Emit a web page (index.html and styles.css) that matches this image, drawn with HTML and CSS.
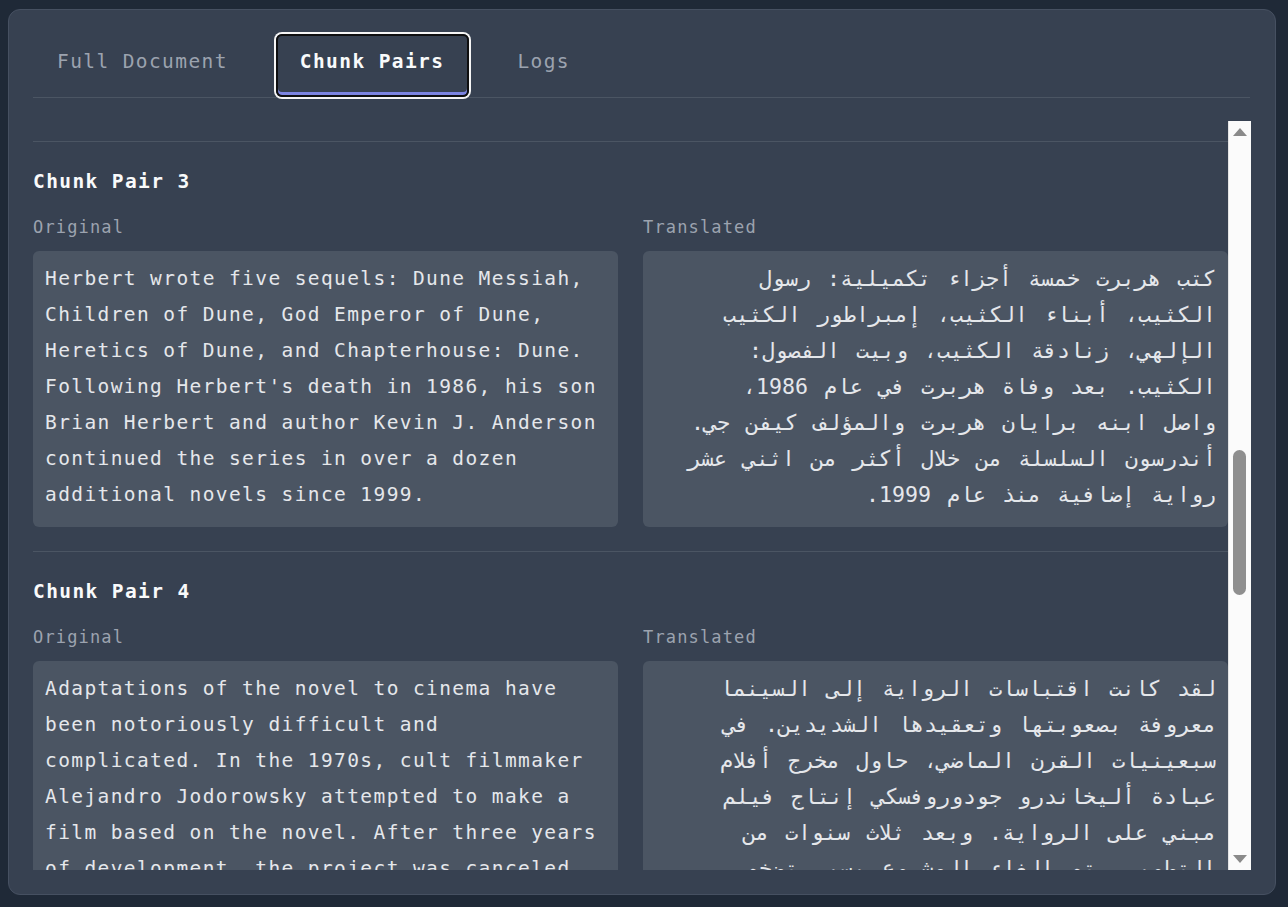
FILE: index.html
```html
<!DOCTYPE html>
<html lang="en">
<head>
<meta charset="utf-8">
<title>Chunk Pairs</title>
<link rel="stylesheet" href="styles.css">
</head>
<body>
<main class="card">
  <nav class="tabs">
    <button class="tab">Full Document</button>
    <button class="tab tab-active">Chunk Pairs</button>
    <button class="tab">Logs</button>
  </nav>
  <div class="scroll-wrap">
  <section class="scroll" id="scroll">
    <article class="chunk">
      <h3 class="chunk-title">Chunk Pair 1</h3>
      <div class="pair">
        <div class="col">
          <div class="label">Original</div>
          <div class="text">Dune is a 1965 epic science fiction novel by American author Frank Herbert, originally published as two separate serials in Analog magazine. It tied with Roger Zelazny's This Immortal for the Hugo Award in 1966, and it won the inaugural Nebula Award for Best Novel. It is the first installment of the Dune Chronicles. It is one of the world's best-selling science fiction novels. Set in the distant future in a feudal interstellar society in which various noble houses control planetary fiefs, Dune tells the story of young Paul Atreides, whose family accepts the stewardship of the planet Arrakis.</div>
        </div>
        <div class="col">
          <div class="label">Translated</div>
          <div class="text text-rtl" dir="rtl" lang="ar">الكثيب هي رواية خيال علمي ملحمية صدرت عام 1965 للمؤلف الأمريكي فرانك هربرت، ونُشرت في الأصل على شكل سلسلتين منفصلتين في مجلة أنالوج. تعادلت مع رواية هذا الخالد لروجر زيلازني في جائزة هوغو عام 1966، وفازت بأول جائزة نيبولا لأفضل رواية. وهي الجزء الأول من سجلات الكثيب، وواحدة من أكثر روايات الخيال العلمي مبيعًا في العالم. تدور أحداثها في المستقبل البعيد في مجتمع إقطاعي بين النجوم تسيطر فيه بيوت نبيلة مختلفة على إقطاعيات كوكبية، وتروي قصة الشاب بول أتريديس الذي تقبل عائلته الوصاية على كوكب أراكيس.</div>
        </div>
      </div>
    </article>
    <article class="chunk">
      <h3 class="chunk-title">Chunk Pair 2</h3>
      <div class="pair">
        <div class="col">
          <div class="label">Original</div>
          <div class="text">While the planet is an inhospitable and sparsely populated desert wasteland, it is the only source of melange, or spice, a drug that extends life and enhances mental abilities. Melange is also necessary for space navigation, which requires a kind of multidimensional awareness and foresight that only the drug provides. As melange can only be produced on Arrakis, control of the planet is a coveted and dangerous undertaking. The story explores the multilayered interactions of politics, religion, ecology, technology, and human emotion, as the factions of the empire confront each other in a struggle for the control of Arrakis and its spice. Herbert began researching the novel in 1959 after visiting the Oregon Dunes near Florence, where the United States Department of Agriculture was using poverty grasses to stabilize the shifting sand.</div>
        </div>
        <div class="col">
          <div class="label">Translated</div>
          <div class="text text-rtl" dir="rtl" lang="ar">على الرغم من أن الكوكب صحراء قاحلة غير مضيافة وقليلة السكان، إلا أنه المصدر الوحيد للميلانج، أو التوابل، وهو عقار يطيل العمر ويعزز القدرات العقلية. والميلانج ضروري أيضًا للملاحة الفضائية، التي تتطلب نوعًا من الوعي متعدد الأبعاد والبصيرة لا يوفره سوى هذا العقار. ولأن الميلانج لا يمكن إنتاجه إلا على أراكيس، فإن السيطرة على الكوكب مهمة مرغوبة وخطيرة. تستكشف القصة التفاعلات متعددة الطبقات بين السياسة والدين والبيئة والتكنولوجيا والعاطفة الإنسانية، بينما تتواجه فصائل الإمبراطورية في صراع للسيطرة على أراكيس وتوابلها. بدأ هربرت البحث لكتابة الرواية عام 1959 بعد زيارته لكثبان أوريغون قرب مدينة فلورنس، حيث كانت وزارة الزراعة الأمريكية تستخدم أعشاب الفقر لتثبيت الرمال المتحركة.</div>
        </div>
      </div>
    </article>
    <article class="chunk" id="c3">
      <h3 class="chunk-title">Chunk Pair 3</h3>
      <div class="pair">
        <div class="col">
          <div class="label">Original</div>
          <div class="text">Herbert wrote five sequels: Dune Messiah, Children of Dune, God Emperor of Dune, Heretics of Dune, and Chapterhouse: Dune. Following Herbert's death in 1986, his son Brian Herbert and author Kevin J. Anderson continued the series in over a dozen additional novels since 1999.</div>
        </div>
        <div class="col">
          <div class="label">Translated</div>
          <div class="text text-rtl" dir="rtl" lang="ar">كتب هربرت خمسة أجزاء تكميلية: رسول الكثيب، أبناء الكثيب، إمبراطور الكثيب الإلهي، زنادقة الكثيب، وبيت الفصول: الكثيب. بعد وفاة هربرت في عام 1986، واصل&nbsp;ابنه برايان هربرت والمؤلف كيفن جي. أندرسون السلسلة من خلال أكثر من اثني عشر رواية إضافية منذ عام 1999.</div>
        </div>
      </div>
    </article>
    <article class="chunk">
      <h3 class="chunk-title">Chunk Pair 4</h3>
      <div class="pair">
        <div class="col">
          <div class="label">Original</div>
          <div class="text">Adaptations of the novel to cinema have been notoriously difficult and complicated. In the 1970s, cult filmmaker Alejandro Jodorowsky attempted to make a film based on the novel. After three years of development, the project was canceled due to a constantly growing budget. In 1984, a film adaptation directed by David Lynch was released to mostly negative responses from critics and failure at the box office, although it later developed a cult following.</div>
        </div>
        <div class="col">
          <div class="label">Translated</div>
          <div class="text text-rtl" dir="rtl" lang="ar">لقد كانت اقتباسات الرواية إلى السينما معروفة بصعوبتها وتعقيدها الشديدين. في سبعينيات القرن الماضي، حاول مخرج أفلام عبادة أليخاندرو جودوروفسكي إنتاج فيلم مبني على الرواية. وبعد ثلاث سنوات من التطوير، تم إلغاء المشروع بسبب تضخم الميزانية المستمر. في عام 1984، صدر فيلم مقتبس من إخراج ديفيد لينش وقوبل بردود فعل سلبية في معظمها من النقاد وفشل في شباك التذاكر، رغم أنه اكتسب لاحقًا قاعدة جماهيرية مخلصة.</div>
        </div>
      </div>
    </article>
    <article class="chunk">
      <h3 class="chunk-title">Chunk Pair 5</h3>
      <div class="pair">
        <div class="col">
          <div class="label">Original</div>
          <div class="text">The novel has also been adapted into a 2000 Sci Fi Channel miniseries, Frank Herbert's Dune, and its 2003 sequel, Frank Herbert's Children of Dune (the latter of which combines the events of Dune Messiah and Children of Dune). A second film adaptation, directed by Denis Villeneuve, was released on October 21, 2021, to positive reviews. It grossed $401 million worldwide and went on to be nominated for ten Academy Awards, winning six.</div>
        </div>
        <div class="col">
          <div class="label">Translated</div>
          <div class="text text-rtl" dir="rtl" lang="ar">كما تم اقتباس الرواية في مسلسل قصير عام 2000 على قناة ساي فاي بعنوان كثيب فرانك هربرت، وتكملته عام 2003 بعنوان أبناء كثيب فرانك هربرت (التي تجمع أحداث رسول الكثيب وأبناء الكثيب). وصدر اقتباس سينمائي ثانٍ من إخراج دوني فيلنوف في 21 أكتوبر 2021، وحظي بمراجعات إيجابية. وحقق إيرادات بلغت 401 مليون دولار حول العالم، ورُشّح لعشر جوائز أوسكار فاز بست منها.</div>
        </div>
      </div>
    </article>
    <article class="chunk">
      <h3 class="chunk-title">Chunk Pair 6</h3>
      <div class="pair">
        <div class="col">
          <div class="label">Original</div>
          <div class="text">The series has also been used as the basis for several board games, role-playing games, and video games. Since 2009, the names of planets from the Dune novels have been adopted for the real-life nomenclature of plains and other features on Saturn's moon Titan. Dune has been called the greatest science fiction novel ever written.</div>
        </div>
        <div class="col">
          <div class="label">Translated</div>
          <div class="text text-rtl" dir="rtl" lang="ar">كما استُخدمت السلسلة أساسًا للعديد من ألعاب الطاولة وألعاب تقمص الأدوار وألعاب الفيديو. ومنذ عام 2009، اعتُمدت أسماء الكواكب الواردة في روايات الكثيب في التسمية الفعلية للسهول والمعالم الأخرى على قمر زحل تيتان. وقد وُصفت الكثيب بأنها أعظم رواية خيال علمي كُتبت على الإطلاق.</div>
        </div>
      </div>
    </article>
  </section>
  <div class="scrollbar" aria-hidden="true">
    <div class="sb-btn">
      <svg width="14" height="8" viewBox="0 0 14 8"><path d="M7 0L14 8H0Z" fill="#8a8a8a"/></svg>
    </div>
    <div class="sb-track" id="track">
      <div class="sb-thumb" id="thumb"></div>
    </div>
    <div class="sb-btn">
      <svg width="14" height="8" viewBox="0 0 14 8"><path d="M0 0H14L7 8Z" fill="#8a8a8a"/></svg>
    </div>
  </div>
  </div>
</main>
<script src="app.js"></script>
</body>
</html>
```
FILE: styles.css
```css
* { box-sizing: border-box; }
html, body { height: 100%; }
body {
  margin: 0;
  padding: 9px 12px 12px 8px;
  background: #1f2937;
  font-family: "DejaVu Sans Mono", "Liberation Mono", monospace;
  color: #e5e7eb;
}
.card {
  height: 100%;
  display: flex;
  flex-direction: column;
  background: #374151;
  border: 1px solid #465061;
  border-radius: 12px;
  padding: 24px;
}
.tabs {
  display: flex;
  gap: 24px;
  border-bottom: 1px solid #4b5563;
  margin-right: 1px;
}
.tab {
  font-family: inherit;
  font-size: 19.5px;
  letter-spacing: 1.4px;
  line-height: 28px;
  color: #9ca3af;
  background: transparent;
  border: 2px solid transparent;
  border-radius: 6px;
  padding: 12px 22px 19px;
  margin: 0;
  cursor: pointer;
}
.tab-active {
  color: #f9fafb;
  font-weight: bold;
  padding-right: 23px;
  border-color: #0f0f10;
  box-shadow: 0 0 0 2px #f5f5f5, inset 0 -3px 0 #7c84e0;
}
.scroll-wrap {
  flex: 1;
  min-height: 0;
  margin-top: 23px;
  display: flex;
}
.scroll {
  position: relative;
  flex: 1;
  min-width: 0;
  overflow: hidden;
}
.scrollbar {
  width: 23px;
  flex: none;
  display: flex;
  flex-direction: column;
  background: #fbfbfb;
  border-left: 1px solid #e4e4e4;
}
.sb-btn {
  height: 22px;
  flex: none;
  display: flex;
  align-items: center;
  justify-content: center;
}
.sb-track {
  flex: 1;
  min-height: 0;
  padding: 0 5px 0 4px;
}
.sb-thumb {
  width: 13px;
  height: 143px;
  margin-top: 309px;
  background: #8f8f8f;
  border-radius: 7px;
}
.chunk {
  padding: 26px 0 24px;
  border-top: 1px solid #4b5563;
}
.chunk:first-child { border-top: none; }
.chunk-title {
  margin: 0 0 17px;
  font-size: 19.5px;
  letter-spacing: 1.4px;
  line-height: 28px;
  font-weight: bold;
  color: #f9fafb;
}
.pair {
  display: grid;
  grid-template-columns: 1fr 1fr;
  gap: 25px;
}
.col {
  display: flex;
  flex-direction: column;
}
.label {
  font-size: 17px;
  letter-spacing: 1.15px;
  line-height: 28px;
  color: #9ca3af;
  margin-bottom: 10px;
}
.text {
  flex: 1;
  background: #4b5563;
  border-radius: 6px;
  padding: 10px 12px 14px;
  font-size: 19.5px;
  letter-spacing: 1.4px;
  line-height: 36px;
  color: #e5e7eb;
}
.text-rtl {
  font-size: 21.6px;
  word-spacing: 3px;
  text-align: right;
}
```
FILE: app.js
```js
(function () {
  var s = document.getElementById('scroll');
  var c = document.getElementById('c3');
  s.scrollTop = c.offsetTop - 20;
  var track = document.getElementById('track');
  var thumb = document.getElementById('thumb');
  var th = track.clientHeight;
  var h = Math.max(30, Math.round(th * s.clientHeight / s.scrollHeight));
  var top = Math.round((th - h) * s.scrollTop / (s.scrollHeight - s.clientHeight));
  thumb.style.height = h + 'px';
  thumb.style.marginTop = top + 'px';
})();
```
